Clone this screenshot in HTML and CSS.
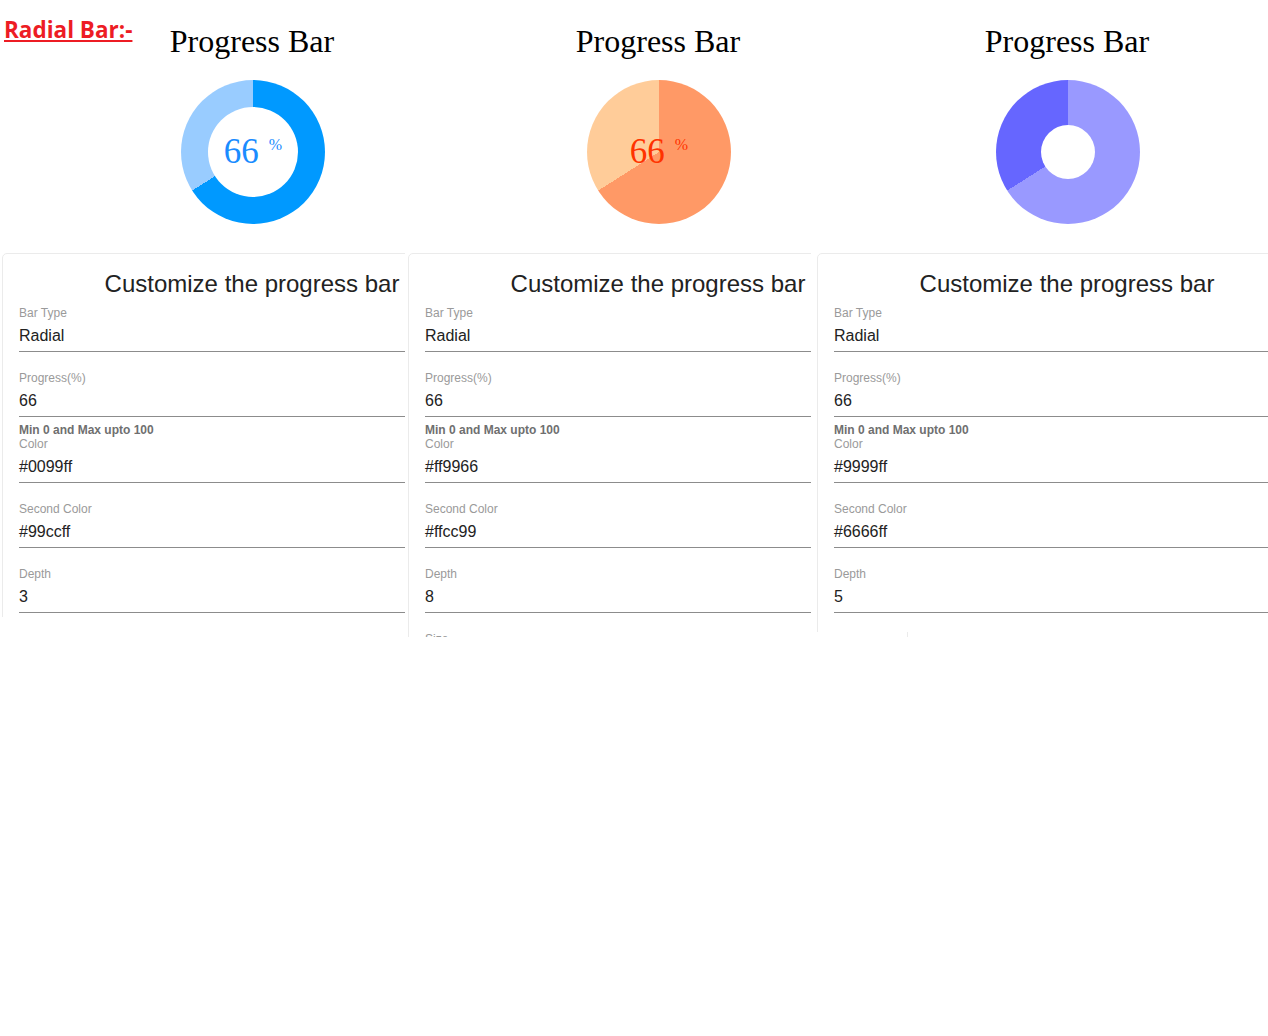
FILE: index.html
```html
<!DOCTYPE html>
<html lang="en">
<head>
<meta charset="utf-8">
<title>Radial Bar</title>
<link rel="stylesheet" href="styles.css">
</head>
<body>
<div class="tag">Radial Bar:-</div>
<div class="row">
  <section class="col col-first">
    <h2 class="heading">Progress Bar</h2>
    <div class="ring ring-blue">
      <div class="hole hole-d3"></div>
      <div class="readout readout-blue"><span class="num">66</span><span class="pct">%</span></div>
    </div>
    <div class="card">
      <h3 class="card-title">Customize the progress bar</h3>
      <div class="field"><div class="label">Bar Type</div><div class="value">Radial</div></div>
      <div class="field"><div class="label">Progress(%)</div><div class="value">66</div></div>
      <div class="helper">Min 0 and Max upto 100</div>
      <div class="field field-tight"><div class="label">Color</div><div class="value">#0099ff</div></div>
      <div class="field"><div class="label">Second Color</div><div class="value">#99ccff</div></div>
      <div class="field"><div class="label">Depth</div><div class="value">3</div></div>
      <div class="field"><div class="label">Size</div><div class="value">200</div></div>
    </div>
  </section>
  <section class="col col-second">
    <h2 class="heading">Progress Bar</h2>
    <div class="ring ring-orange">
      <div class="hole hole-d8"></div>
      <div class="readout readout-orange"><span class="num">66</span><span class="pct">%</span></div>
    </div>
    <div class="card">
      <h3 class="card-title">Customize the progress bar</h3>
      <div class="field"><div class="label">Bar Type</div><div class="value">Radial</div></div>
      <div class="field"><div class="label">Progress(%)</div><div class="value">66</div></div>
      <div class="helper">Min 0 and Max upto 100</div>
      <div class="field field-tight"><div class="label">Color</div><div class="value">#ff9966</div></div>
      <div class="field"><div class="label">Second Color</div><div class="value">#ffcc99</div></div>
      <div class="field"><div class="label">Depth</div><div class="value">8</div></div>
      <div class="field"><div class="label">Size</div><div class="value">200</div></div>
    </div>
  </section>
  <section class="col col-third">
    <h2 class="heading">Progress Bar</h2>
    <div class="ring ring-violet">
      <div class="hole hole-d5"></div>
    </div>
    <div class="card">
      <h3 class="card-title">Customize the progress bar</h3>
      <div class="field"><div class="label">Bar Type</div><div class="value">Radial</div></div>
      <div class="field"><div class="label">Progress(%)</div><div class="value">66</div></div>
      <div class="helper">Min 0 and Max upto 100</div>
      <div class="field field-tight"><div class="label">Color</div><div class="value">#9999ff</div></div>
      <div class="field"><div class="label">Second Color</div><div class="value">#6666ff</div></div>
      <div class="field"><div class="label">Depth</div><div class="value">5</div></div>
      <div class="field"><div class="label">Size</div><div class="value">200</div></div>
    </div>
  </section>
</div>
</body>
</html>
```

FILE: styles.css
```css
html, body {
  margin: 0;
  padding: 0;
  background: #ffffff;
  overflow: hidden;
}

body {
  position: relative;
  font-family: "Liberation Sans", Arial, sans-serif;
  color: #222222;
}

.tag {
  position: absolute;
  left: 4px;
  top: 14px;
  z-index: 5;
  font-family: "Open Sans", "Liberation Sans", sans-serif;
  font-weight: 700;
  font-size: 22.5px;
  line-height: normal;
  color: #ed1c24;
  text-decoration: underline;
  text-decoration-thickness: 2px;
  text-underline-offset: 2px;
}

.row {
  display: flex;
  align-items: flex-start;
}

.col {
  flex: none;
  background: #ffffff;
  overflow: hidden;
  padding-top: 23px;
  box-sizing: border-box;
}

.col-first {
  padding-left: 2px;
  width: 502px;
  height: 617px;
  margin-right: -97px;
}

.col-second {
  padding-left: 3px;
  width: 503px;
  height: 637px;
  margin-right: -97px;
}

.col-third {
  padding-left: 6px;
  width: 506px;
  height: 632px;
}

.heading {
  width: 500px;
  margin: 0;
  text-align: center;
  font-family: "Liberation Serif", "Times New Roman", serif;
  font-weight: normal;
  font-size: 32px;
  line-height: 37px;
  color: #000000;
}

.ring {
  width: 144px;
  height: 144px;
  margin: 20px 0 0 179px;
  border-radius: 50%;
  display: grid;
  place-items: center;
}

.ring > * {
  grid-area: 1 / 1;
}

.ring-blue {
  background: conic-gradient(#0099ff 0 66%, #99ccff 66% 100%);
}

.ring-orange {
  background: conic-gradient(#ff9966 0 66%, #ffcc99 66% 100%);
}

.ring-violet {
  background: conic-gradient(#9999ff 0 66%, #6666ff 66% 100%);
}

.hole {
  border-radius: 50%;
  background: #ffffff;
}

.hole-d3 {
  width: 90px;
  height: 90px;
}

.hole-d5 {
  width: 54px;
  height: 54px;
}

.hole-d8 {
  width: 0;
  height: 0;
}

.readout {
  display: flex;
  align-items: flex-start;
  padding-bottom: 2px;
  font-family: "Liberation Serif", "Times New Roman", serif;
}

.readout .num {
  font-size: 35px;
  line-height: 35px;
}

.readout .pct {
  font-size: 16px;
  line-height: 16px;
  margin-top: 3px;
  margin-left: 10px;
}

.readout-blue {
  color: #1a8cff;
}

.readout-orange {
  color: #ff3300;
}

.card {
  width: 500px;
  box-sizing: border-box;
  margin-top: 29px;
  padding: 16px 16px 40px;
  border: 1px solid #ebebeb;
  border-radius: 5px;
  background: #ffffff;
}

.card-title {
  margin: 0 0 8px;
  text-align: center;
  font-weight: normal;
  font-size: 24px;
  line-height: 28px;
  color: #222222;
}

.field {
  margin-top: 19px;
  padding-bottom: 3px;
  border-bottom: 1px solid #8c8c8c;
}

.card-title + .field,
.field-tight {
  margin-top: 0;
}

.label {
  font-size: 12px;
  line-height: 14px;
  color: #9a9a9a;
}

.value {
  margin-top: 4px;
  font-size: 16px;
  line-height: 24px;
  color: #222222;
}

.helper {
  margin-top: 6px;
  font-size: 12px;
  line-height: 14px;
  font-weight: 700;
  color: #6f6f6f;
}
```
